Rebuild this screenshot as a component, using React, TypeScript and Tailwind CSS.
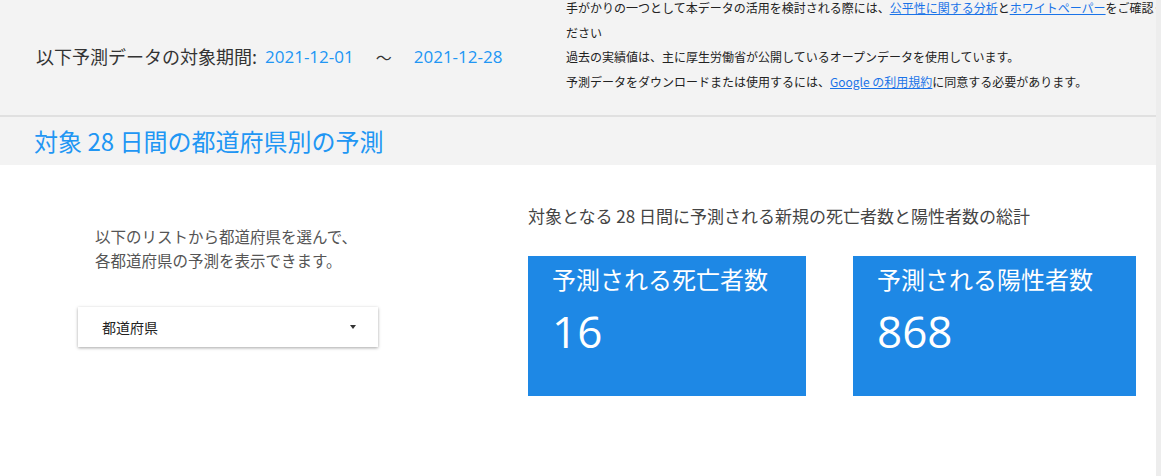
const jp = "font-['Noto_Sans_CJK_JP','Noto_Sans',sans-serif]";
const latin = "font-['Open_Sans','Noto_Sans_CJK_JP',sans-serif]";

function StatCard({ title, value, className }: { title: string; value: string; className?: string }) {
  return (
    <div className={`h-[140px] bg-[#1e88e5] pl-[24px] pt-[7px] text-white ${className ?? ""}`}>
      <div className="text-[24px] leading-[32px]">{title}</div>
      <div className={`${latin} mt-[11px] text-[44px] leading-[50px]`}>{value}</div>
    </div>
  );
}

export default function App() {
  return (
    <div className={`flex h-[476px] w-[1161px] overflow-hidden ${jp}`}>
      <div className="min-w-0 flex-1 overflow-hidden bg-white">
        {/* header */}
        <div className="flex h-[115px] bg-[#f3f3f3]">
          <div className="flex w-[566px] shrink-0 items-center pl-[36px] pb-[2px]">
            <span className="text-[18px] text-[#333]">以下予測データの対象期間:</span>
            <span className={`${latin} ml-[8px] text-[17px] text-[#2196f3]`}>2021-12-01</span>
            <span className="ml-[22px] text-[16px] text-[#333]">〜</span>
            <span className={`${latin} ml-[22px] text-[17px] text-[#2196f3]`}>2021-12-28</span>
          </div>
          {/* the last glyph of line one runs under the scrollbar, as in the page */}
          <div className="-mt-[4px] w-[606px] shrink-0 text-[12px] leading-[24.5px] text-[#222]">
            <p>
              手がかりの一つとして本データの活用を検討される際には、
              <a className="text-[#1a73e8] underline">公平性に関する分析</a>と
              <a className="text-[#1a73e8] underline">ホワイトペーパー</a>をご確認ください
            </p>
            <p>過去の実績値は、主に厚生労働省が公開しているオープンデータを使用しています。</p>
            <p>
              予測データをダウンロードまたは使用するには、
              <a className="text-[#1a73e8] underline">Google の利用規約</a>に同意する必要があります。
            </p>
          </div>
        </div>
        <div className="h-[2px] bg-[#e0e0e0]" />
        <div className="flex h-[48px] items-center bg-[#f3f3f3] pl-[34px]">
          <h2 className="text-[24px] text-[#2196f3]">対象 28 日間の都道府県別の予測</h2>
        </div>

        {/* body */}
        <div className="flex">
          <div className="w-[528px] shrink-0 pl-[78px]">
            <p className="mt-[59px] pl-[17px] text-[15.5px] leading-[24px] text-[#555]">
              以下のリストから都道府県を選んで、
              <br />
              各都道府県の予測を表示できます。
            </p>
            <button className="mt-[35px] flex h-[40px] w-[300px] items-center justify-between bg-white pl-[24px] pr-[22px] text-[14px] text-[#222] shadow-[0_1px_3px_rgba(0,0,0,0.35)]">
              <span>都道府県</span>
              <span className="h-0 w-0 border-x-[3px] border-t-[4px] border-x-transparent border-t-[#333]" />
            </button>
          </div>
          <div className="flex-1">
            <h3 className="mt-[39px] text-[17px] leading-[24px] text-[#444]">
              対象となる 28 日間に予測される新規の死亡者数と陽性者数の総計
            </h3>
            <div className="mt-[28px] flex">
              <StatCard title="予測される死亡者数" value="16" className="w-[278px]" />
              <StatCard title="予測される陽性者数" value="868" className="ml-[47px] w-[283px]" />
            </div>
          </div>
        </div>
      </div>
      <div className="w-[5px] shrink-0 bg-[#ededed]" />
    </div>
  );
}
